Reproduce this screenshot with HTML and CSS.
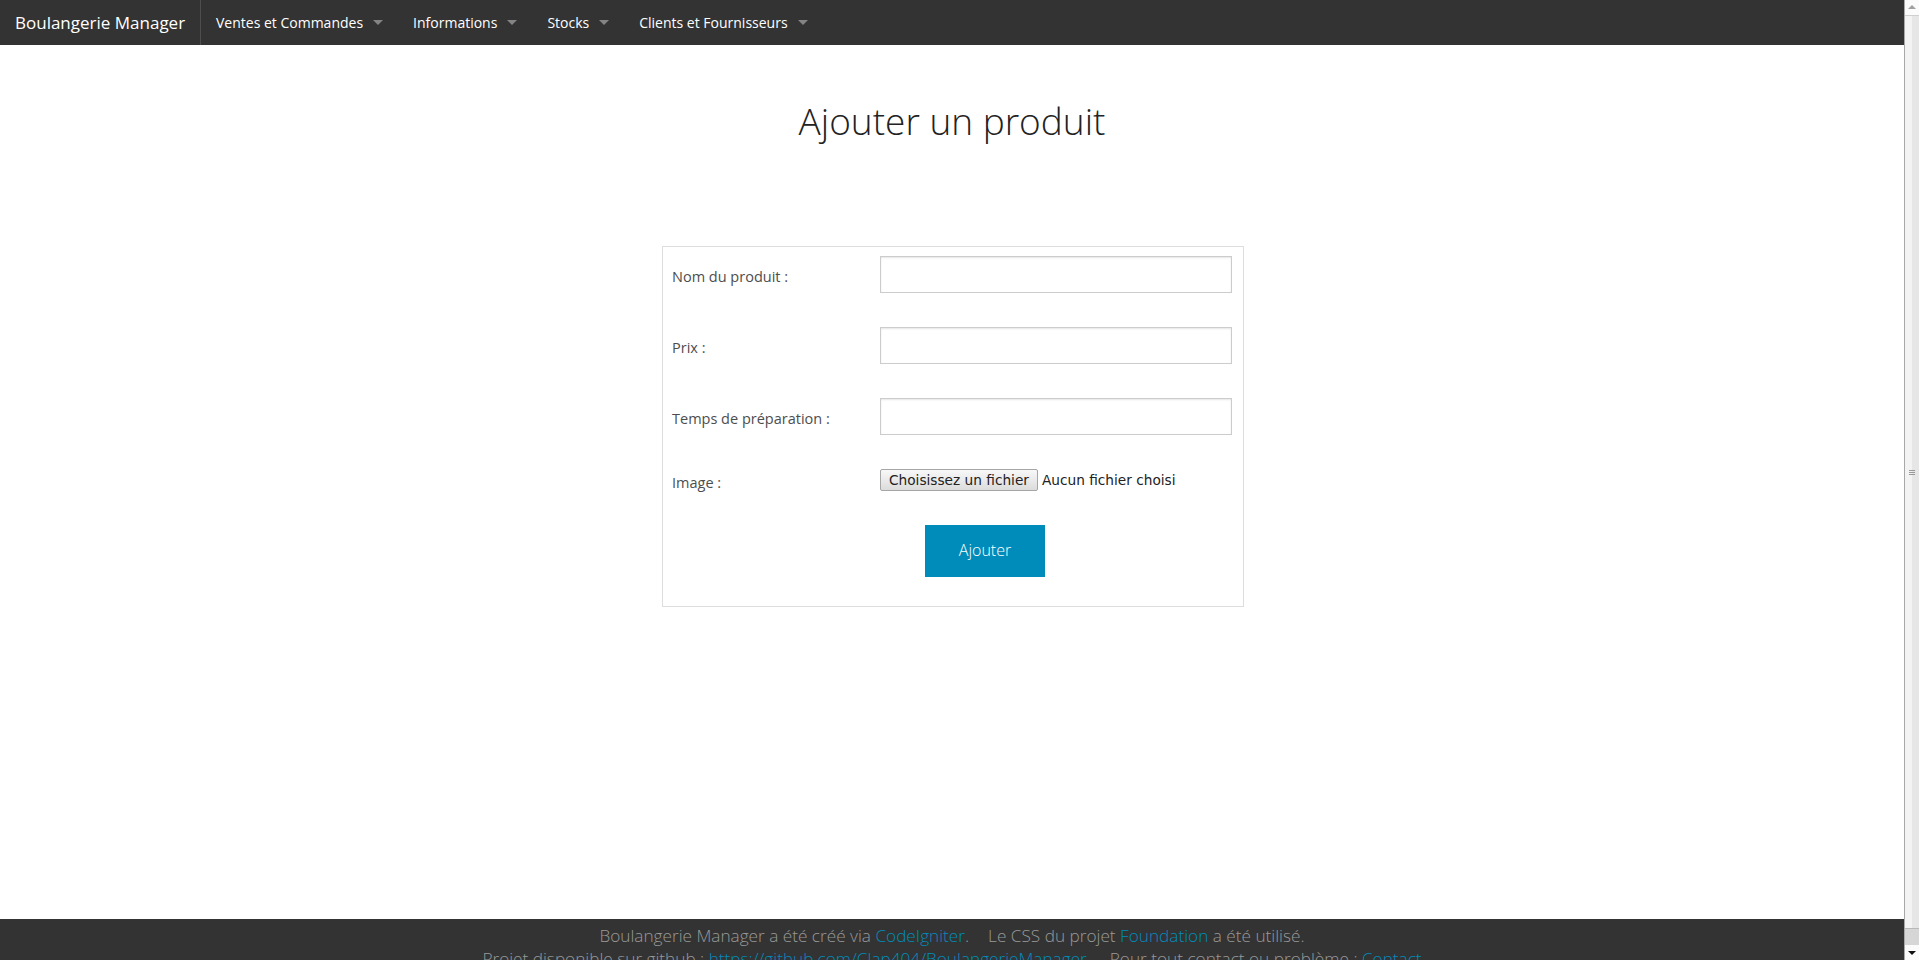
FILE: index.html
```html
<!DOCTYPE html>
<html lang="fr">
<head>
<meta charset="utf-8">
<title>Boulangerie Manager - Ajouter un produit</title>
<link rel="stylesheet" href="styles.css">
</head>
<body>
<div class="page">
  <nav class="topbar">
    <div class="brand"><a href="#">Boulangerie Manager</a></div>
    <ul class="menu">
      <li class="menu-item"><a href="#">Ventes et Commandes</a></li>
      <li class="menu-item"><a href="#">Informations</a></li>
      <li class="menu-item"><a href="#">Stocks</a></li>
      <li class="menu-item"><a href="#">Clients et Fournisseurs</a></li>
    </ul>
  </nav>

  <main class="content">
    <h1 class="page-title">Ajouter un produit</h1>
    <form class="product-form" action="#">
      <label class="field-label" for="nom">Nom du produit :</label>
      <div class="field-cell"><input id="nom" class="text-input" type="text"></div>

      <label class="field-label" for="prix">Prix :</label>
      <div class="field-cell"><input id="prix" class="text-input" type="text"></div>

      <label class="field-label" for="temps">Temps de préparation :</label>
      <div class="field-cell"><input id="temps" class="text-input" type="text"></div>

      <span class="field-label">Image :</span>
      <div class="field-cell file-cell">
        <span class="file-button">Choisissez un fichier</span><span class="file-name">Aucun fichier choisi</span>
      </div>

      <div class="submit-cell"><button class="submit-btn" type="button">Ajouter</button></div>
    </form>
  </main>

  <footer class="site-footer">
    <p class="footer-line">Boulangerie Manager a été créé via <a href="#">CodeIgniter</a>.<span class="footer-sep">Le CSS du projet <a href="#">Foundation</a> a été utilisé.</span></p>
    <p class="footer-line">Projet disponible sur github : <a href="#">https://github.com/Clap404/BoulangerieManager</a><span class="footer-sep wide">Pour tout contact ou problème : <a href="#">Contact</a></span></p>
  </footer>
</div>

<div class="scrollbar" aria-hidden="true">
  <div class="sb-btn sb-up"></div>
  <div class="sb-track">
    <div class="sb-thumb"><span class="sb-grip"></span></div>
  </div>
  <div class="sb-btn sb-down"></div>
</div>
</body>
</html>
```

FILE: styles.css
```css
html, body {
  margin: 0;
  padding: 0;
}

body {
  font-family: "Open Sans", "Liberation Sans", sans-serif;
  color: #222222;
  background: #ffffff;
}

a {
  text-decoration: none;
}

.page {
  margin-right: 15px;
}

/* ---------- top bar ---------- */
.topbar {
  display: flex;
  height: 45px;
  background: #333333;
}

.brand {
  width: 201px;
  box-sizing: border-box;
  border-right: 1px solid #4e4e4e;
}

.brand a {
  display: block;
  padding-left: 15px;
  line-height: 45px;
  font-size: 17px;
  color: #ffffff;
  white-space: nowrap;
}

.menu {
  display: flex;
  margin: 0;
  padding: 0;
  list-style: none;
}

.menu-item a {
  position: relative;
  display: block;
  padding: 0 35px 0 15px;
  line-height: 45px;
  font-size: 14px;
  color: #ffffff;
  white-space: nowrap;
}

.menu-item a::after {
  content: "";
  position: absolute;
  right: 15px;
  top: 20px;
  width: 0;
  height: 0;
  border: 5px solid transparent;
  border-top-color: rgba(255, 255, 255, 0.4);
}

/* ---------- content ---------- */
.content {
  box-sizing: border-box;
  min-height: 874px;
  padding-top: 50px;
}

.page-title {
  margin: 0;
  font-size: 37px;
  font-weight: 300;
  line-height: 52px;
  text-align: center;
  color: #222222;
}

.product-form {
  display: grid;
  grid-template-columns: 207px 373px;
  width: 582px;
  box-sizing: border-box;
  margin: 99px 0 0 calc(50% - 290px);
  border: 1px solid #dddddd;
  background: #ffffff;
}

.field-label {
  align-self: center;
  padding: 9px 10px 21px 9px;
  font-size: 14.5px;
  font-weight: 400;
  line-height: 21px;
  color: #4d4d4d;
}

.field-cell {
  padding: 9px 10px;
}

.text-input {
  display: block;
  box-sizing: border-box;
  width: 352px;
  height: 37px;
  margin: 0 0 16px;
  padding: 8px;
  border: 1px solid #cccccc;
  border-radius: 0;
  background: #ffffff;
  box-shadow: inset 0 1px 2px rgba(0, 0, 0, 0.1);
  font-family: inherit;
  font-size: 14px;
}

.file-cell {
  display: flex;
  align-items: center;
  height: 22px;
  padding-bottom: 25px;
  font-family: "DejaVu Sans", sans-serif;
  font-size: 13.7px;
  color: #222222;
}

.file-button {
  box-sizing: border-box;
  height: 22px;
  padding: 0 8px;
  line-height: 20px;
  border: 1px solid #a6a6a6;
  border-radius: 2px;
  background: linear-gradient(#f8f8f8, #dcdcdc);
  white-space: nowrap;
}

.file-name {
  margin-left: 4px;
  white-space: nowrap;
}

.submit-cell {
  grid-column: 1 / -1;
  padding: 9px 10px 9px 262px;
}

.submit-btn {
  display: block;
  box-sizing: border-box;
  width: 120px;
  height: 52px;
  margin: 0 0 20px;
  padding: 16px 0 17px;
  border: none;
  background: #008cba;
  color: #ffffff;
  font-family: "Open Sans", sans-serif;
  font-size: 16px;
  font-weight: 300;
  line-height: 19px;
  text-align: center;
}

/* ---------- footer ---------- */
.site-footer {
  background: #333333;
  padding: 5px 0 10px;
  text-align: center;
  font-size: 17.2px;
  font-weight: 300;
  color: #999999;
}

.footer-line {
  margin: 0;
  line-height: 23px;
  white-space: nowrap;
}

.site-footer a {
  color: #008cba;
}

.footer-sep {
  margin-left: 19px;
}

.footer-sep.wide {
  margin-left: 23px;
}

/* ---------- window scrollbar (as in the capture) ---------- */
.scrollbar {
  position: fixed;
  top: 0;
  right: 0;
  width: 15px;
  height: 100vh;
  box-sizing: border-box;
  display: flex;
  flex-direction: column;
  border-left: 1px solid #a8a8a8;
  background: #f0f0f0;
}

.sb-btn {
  position: relative;
  flex: none;
  height: 15px;
  background: #fbfbfb;
}

.sb-up {
  border-bottom: 1px solid #cfcfcf;
}

.sb-up::after,
.sb-down::after {
  content: "";
  position: absolute;
  left: 3px;
  width: 0;
  height: 0;
  border-left: 4px solid transparent;
  border-right: 4px solid transparent;
}

.sb-up::after {
  top: 5px;
  border-bottom: 4px solid #a0a0a0;
}

.sb-down::after {
  top: 6px;
  border-top: 4px solid #111111;
}

.sb-track {
  flex: 1;
  display: flex;
  flex-direction: column;
  background: #d6d6d6;
}

.sb-thumb {
  flex: none;
  height: 912px;
  display: flex;
  align-items: center;
  justify-content: center;
  border-bottom: 1px solid #b8b8b8;
  background: linear-gradient(to right, #f3f3f3 50%, #e6e6e6 50%);
}

.sb-grip {
  width: 6px;
  height: 5px;
  border-top: 1px solid #9a9a9a;
  border-bottom: 1px solid #9a9a9a;
  box-sizing: border-box;
  background: linear-gradient(#9a9a9a, #9a9a9a) center / 100% 1px no-repeat;
}
```
